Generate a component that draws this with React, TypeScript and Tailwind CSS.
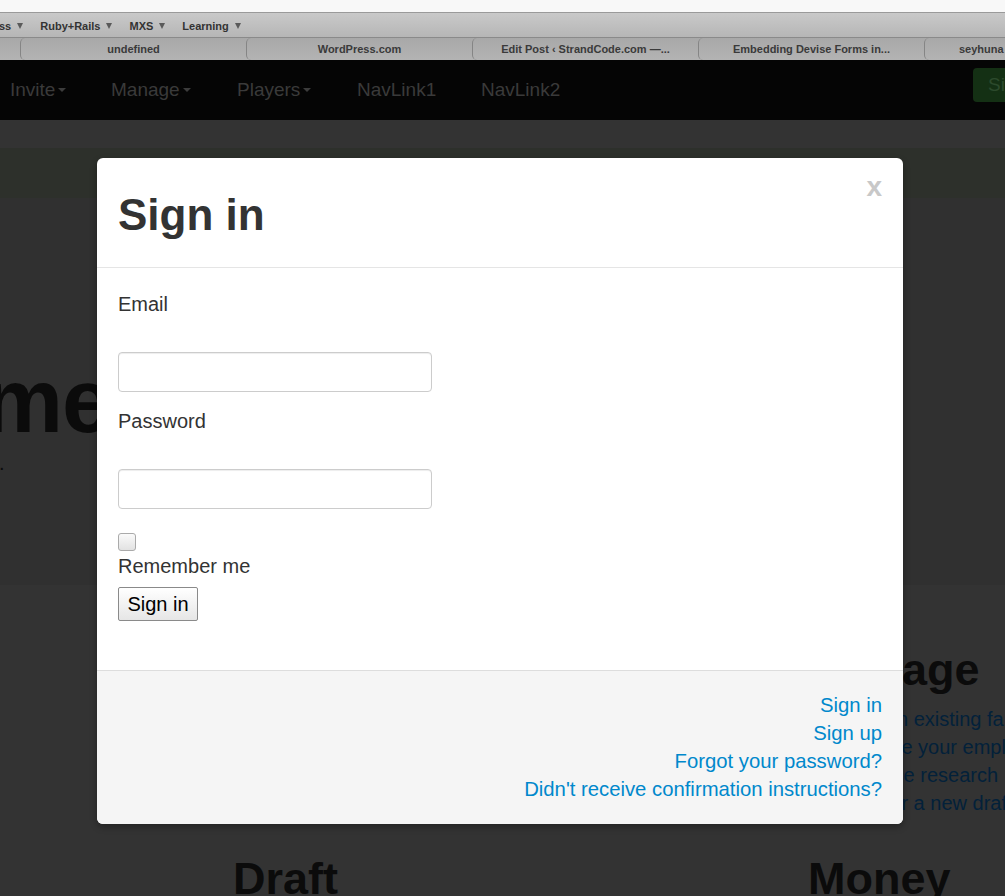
import React from 'react';

function Caret({ color = 'border-t-[#3c3c3c]' }: { color?: string }) {
  return <span className={`ml-[3px] inline-block w-0 h-0 border-t-[4px] border-x-[4px] border-x-transparent ${color}`} />;
}

function Bookmark({ label }: { label: string }) {
  return (
    <div className="flex items-center">
      <span>{label}</span>
      <span className="ml-[6px] inline-block w-0 h-0 border-t-[6px] border-x-[3.5px] border-x-transparent border-t-[#5a5a5a]" />
    </div>
  );
}

const tabs = [
  'undefined',
  'WordPress.com',
  'Edit Post ‹ StrandCode.com —...',
  'Embedding Devise Forms in...',
  'seyhuna',
];

export default function App() {
  return (
    <div className="relative w-[1005px] h-[896px] overflow-hidden bg-[#333333] font-['Liberation_Sans',Arial,sans-serif]">
      {/* Browser chrome */}
      <div className="h-[13px] bg-[#f8f8f8] border-b border-[#9a9a9a]" />
      <div className="h-[24px] pt-[2px] bg-gradient-to-b from-[#c9c9c9] to-[#b6b6b6] flex items-center gap-[17px] text-[11px] font-bold text-[#333333] -ml-[1px]">
        <Bookmark label="ss" />
        <Bookmark label="Ruby+Rails" />
        <Bookmark label="MXS" />
        <Bookmark label="Learning" />
      </div>
      <div className="h-[23px] bg-gradient-to-b from-[#a8a8a8] to-[#b3b3b3] border-t border-[#8a8a8a] flex text-[11px] font-bold text-[#3a3a3a] whitespace-nowrap">
        <div className="w-[20px] shrink-0" />
        {tabs.map((t, i) => (
          <div
            key={t}
            className={`h-full border-l border-[#858585] rounded-tl-[5px] rounded-bl-[5px] flex items-center shrink-0 ${
              i === 4 ? 'w-[226px] pl-[34px]' : 'w-[226px] justify-center'
            }`}
          >
            {t}
          </div>
        ))}
      </div>

      {/* Page navbar (dimmed by the backdrop) */}
      <div className="h-[60px] bg-[#050505] flex items-center pl-[10px] text-[19px] text-[#3a3a3a] whitespace-nowrap">
        <div className="w-[101px] shrink-0 flex items-center">Invite<Caret /></div>
        <div className="w-[126px] shrink-0 flex items-center">Manage<Caret /></div>
        <div className="w-[120px] shrink-0 flex items-center">Players<Caret /></div>
        <div className="w-[124px] shrink-0">NavLink1</div>
        <div className="shrink-0">NavLink2</div>
        <div className="ml-auto -mr-[44px] self-start mt-[8px] h-[34px] w-[76px] rounded-[4px] bg-[#143014] text-[#2c4a2c] flex items-center pl-[15px] text-[19px]">
          Sign in
        </div>
      </div>

      <div className="h-[28px] bg-[#333333]" />
      <div className="h-[50px] bg-[#2d302b]" />

      {/* Hero */}
      <div className="h-[387px] bg-[#303030] text-[#0b0b0b] whitespace-nowrap">
        <div className="pt-[158px] -ml-[17px] text-[90px] leading-[90px] font-bold tracking-[-1px]">me</div>
        <div className="mt-[3px] -ml-[1px] text-[20px] leading-[28px]">.</div>
      </div>

      {/* Lower columns */}
      <div className="pl-[233px] whitespace-nowrap">
        <div className="flex">
          <div className="w-[575px] shrink-0" />
          <div className="pt-[62px]">
            <div className="pl-[4px] text-[45px] leading-[45px] font-bold text-[#0b0b0b]">Manage</div>
            <div className="mt-[13px] text-[20px] leading-[28px] text-[#03213a]">
              <div>Manage an existing fantasy league</div>
              <div>Personalize your employees</div>
              <div>Do advance research</div>
              <div>Prepare for a new draft</div>
            </div>
          </div>
        </div>
        <div className="flex mt-[39px] text-[45px] leading-[45px] font-bold text-[#0b0b0b]">
          <div className="w-[575px] shrink-0">Draft</div>
          <div>Money</div>
        </div>
      </div>

      {/* Modal */}
      <div className="absolute left-[97px] top-[158px] w-[806px] bg-white rounded-[6px] shadow-[0_3px_7px_rgba(0,0,0,0.3)] overflow-hidden">
        <div className="relative px-[21px] pt-[33px] pb-[28px] border-b border-[#e5e5e5]">
          <h1 className="text-[44px] leading-[48px] font-bold text-[#333333]">Sign in</h1>
          <span className="absolute right-[21px] top-[15px] text-[28px] leading-[28px] font-bold text-[#c8c8c8]">x</span>
        </div>
        <div className="px-[21px] pt-[22px] pb-[49px] text-[20px] leading-[28px] text-[#333333]">
          <label className="block">Email</label>
          <input type="email" className="block mt-[34px] w-[314px] h-[40px] bg-white border border-[#cccccc] rounded-[4px] shadow-[inset_0_1px_1px_rgba(0,0,0,0.075)]" />
          <label className="block mt-[15px]">Password</label>
          <input type="password" className="block mt-[34px] w-[314px] h-[40px] bg-white border border-[#cccccc] rounded-[4px] shadow-[inset_0_1px_1px_rgba(0,0,0,0.075)]" />
          <input type="checkbox" className="block mt-[24px] w-[18px] h-[18px] appearance-none rounded-[3px] border border-[#aaaaaa] bg-gradient-to-b from-[#fafafa] to-[#e2e2e2]" />
          <label className="block mt-[1px]">Remember me</label>
          <button className="block mt-[7px] w-[80px] h-[34px] border border-[#8a8a8a] rounded-[2px] bg-gradient-to-b from-white to-[#e6e6e6] text-[20px] leading-[28px] text-black">
            Sign in
          </button>
        </div>
        <div className="border-t border-[#dddddd] bg-[#f5f5f5] pt-[20px] pb-[21px] pr-[21px] text-right text-[20.3px] leading-[28px] text-[#0088cc]">
          <div>Sign in</div>
          <div>Sign up</div>
          <div>Forgot your password?</div>
          <div>Didn&apos;t receive confirmation instructions?</div>
        </div>
      </div>
    </div>
  );
}
